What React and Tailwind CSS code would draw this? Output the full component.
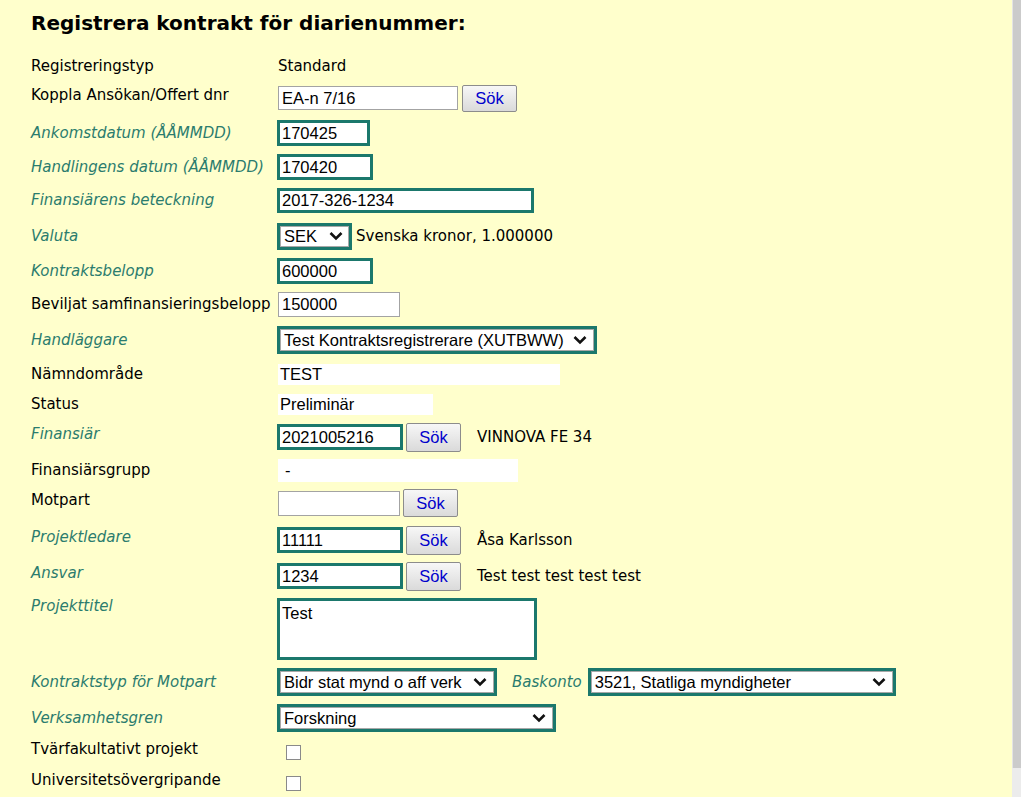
import React from "react";

const TEAL = "border-[#1b786c]";
const ARIAL = "font-['Liberation_Sans',Arial,sans-serif] text-[16.5px] text-black";

/** ==== small form pieces ==== */
const Chevron = () => (
  <svg width="14" height="10" viewBox="0 0 14 10" className="shrink-0">
    <path d="M1.5 2 L7 7.5 L12.5 2" fill="none" stroke="#111" strokeWidth="2.6" />
  </svg>
);

const TealInput = ({ value, w, h = "h-[26px]" }) => (
  <input
    readOnly
    value={value}
    className={`box-border ${w} ${h} border-[3px] ${TEAL} bg-white px-[2px] outline-none ${ARIAL}`}
  />
);

const PlainInput = ({ value = "", w, h = "h-[25px]" }) => (
  <input
    readOnly
    value={value}
    className={`ml-px box-border ${w} ${h} border border-[#a3a3a3] bg-white px-[3px] outline-none ${ARIAL}`}
  />
);

const SokButton = ({ ml = "ml-[3px]", h = "h-[29px]" }) => (
  <button
    type="button"
    className={`${ml} box-border ${h} w-[55px] rounded-[2px] border border-[#8c8c8c] bg-linear-to-b from-[#f7f7f7] to-[#dadada] font-['Liberation_Sans',Arial,sans-serif] text-[16.5px] text-[#0000cc]`}
  >
    Sök
  </button>
);

const TealSelect = ({ value, w, h = "h-[28px]", pr = "pr-[6px]" }) => (
  <div className={`box-border ${w} ${h} border-[3px] ${TEAL} bg-white`}>
    <div className={`box-border flex h-full items-center justify-between border border-[#a8a8a8] pl-[3px] ${pr} ${ARIAL}`}>
      <span className="whitespace-nowrap">{value}</span>
      <Chevron />
    </div>
  </div>
);

const ReadField = ({ value, w, h = "h-[21px]", pl = "pl-[2px]" }) => (
  <div className={`ml-px flex ${w} ${h} items-center bg-white ${pl} ${ARIAL}`}>{value}</div>
);

const Checkbox = () => (
  <div className="ml-[9px] box-border h-[15px] w-[15px] border border-[#8a8a8a] bg-white" />
);

const Row = ({ label, italic, h, lift, top, children }) => (
  <div className={`flex ${top ? "items-start" : "items-center"} ${h}`}>
    <div
      className={`w-[246px] shrink-0 whitespace-nowrap ${italic ? "italic text-[#2b7c6e]" : "text-black"} ${lift ? "-mt-[6px]" : ""} ${top ? "pt-[2px]" : ""}`}
    >
      {label}
    </div>
    <div className={`flex items-center ${top ? "pt-[5px]" : ""}`}>{children}</div>
  </div>
);

export default function App() {
  return (
    <div className="flex h-[797px] w-full overflow-hidden font-['DejaVu_Sans',Verdana,sans-serif] text-[15px]">
      <div className="flex-1 bg-[#ffffcc] pl-[31px]">
        <h1 className="h-[51px] pt-[11px] text-[20px] leading-[24px] font-bold text-black">
          Registrera kontrakt för diarienummer:
        </h1>

        <Row label="Registreringstyp" h="h-[30px]">
          <span className="ml-px">Standard</span>
        </Row>

        <Row label="Koppla Ansökan/Offert dnr" h="h-[34px]" lift>
          <PlainInput value="EA-n 7/16" w="w-[180px]" h="h-[24px]" />
          <SokButton ml="ml-[4px]" h="h-[27px]" />
        </Row>

        <Row label="Ankomstdatum (ÅÅMMDD)" italic h="h-[36px]">
          <TealInput value="170425" w="w-[93px]" />
        </Row>

        <Row label="Handlingens datum (ÅÅMMDD)" italic h="h-[32px]">
          <TealInput value="170420" w="w-[96px]" />
        </Row>

        <Row label="Finansiärens beteckning" italic h="h-[34px]">
          <TealInput value="2017-326-1234" w="w-[257px]" h="h-[25px]" />
        </Row>

        <Row label="Valuta" italic h="h-[38px]">
          <TealSelect value="SEK" w="w-[75px]" h="h-[27px]" pr="pr-[5px]" />
          <span className="ml-[4px]">Svenska kronor, 1.000000</span>
        </Row>

        <Row label="Kontraktsbelopp" italic h="h-[32px]">
          <TealInput value="600000" w="w-[96px]" />
        </Row>

        <Row label="Beviljat samfinansieringsbelopp" h="h-[34px]">
          <PlainInput value="150000" w="w-[122px]" />
        </Row>

        <Row label="Handläggare" italic h="h-[38px]">
          <TealSelect value="Test Kontraktsregistrerare (XUTBWW)" w="w-[320px]" />
        </Row>

        <Row label="Nämndområde" h="h-[30px]">
          <ReadField value="TEST" w="w-[282px]" />
        </Row>

        <Row label="Status" h="h-[30px]">
          <ReadField value="Preliminär" w="w-[155px]" />
        </Row>

        <Row label="Finansiär" italic h="h-[36px]" lift>
          <TealInput value="2021005216" w="w-[126px]" />
          <SokButton />
          <span className="ml-[16px]">VINNOVA FE 34</span>
        </Row>

        <Row label="Finansiärsgrupp" h="h-[30px]">
          <ReadField value="-" w="w-[240px]" h="h-[23px]" pl="pl-[7px]" />
        </Row>

        <Row label="Motpart" h="h-[36px]" lift>
          <PlainInput w="w-[122px]" />
          <SokButton ml="ml-[3px]" h="h-[28px]" />
        </Row>

        <Row label="Projektledare" italic h="h-[38px]" lift>
          <TealInput value="11111" w="w-[126px]" />
          <SokButton />
          <span className="ml-[16px]">Åsa Karlsson</span>
        </Row>

        <Row label="Ansvar" italic h="h-[34px]" lift>
          <TealInput value="1234" w="w-[126px]" />
          <SokButton />
          <span className="ml-[16px]">Test test test test test</span>
        </Row>

        <Row label="Projekttitel" italic h="h-[70px]" top>
          <textarea
            readOnly
            value="Test"
            className={`box-border h-[62px] w-[260px] resize-none border-[3px] ${TEAL} bg-white px-[2px] py-0 outline-none ${ARIAL}`}
          />
        </Row>

        <Row label="Kontraktstyp för Motpart" italic h="h-[38px]">
          <TealSelect value="Bidr stat mynd o aff verk" w="w-[220px]" />
          <span className="ml-[15px] italic text-[#2b7c6e]">Baskonto</span>
          <div className="ml-[6px]">
            <TealSelect value="3521, Statliga myndigheter" w="w-[308px]" />
          </div>
        </Row>

        <Row label="Verksamhetsgren" italic h="h-[34px]">
          <TealSelect value="Forskning" w="w-[279px]" />
        </Row>

        <Row label="Tvärfakultativt projekt" h="h-[34px]" lift>
          <Checkbox />
        </Row>

        <Row label="Universitetsövergripande" h="h-[28px]" lift>
          <Checkbox />
        </Row>
      </div>

      <div className="flex w-[9px] flex-col">
        <div className="h-[768px] border-l border-[#e4e4e4] bg-[#cbcbcb]" />
        <div className="flex-1 bg-[#ececec]" />
      </div>
    </div>
  );
}
